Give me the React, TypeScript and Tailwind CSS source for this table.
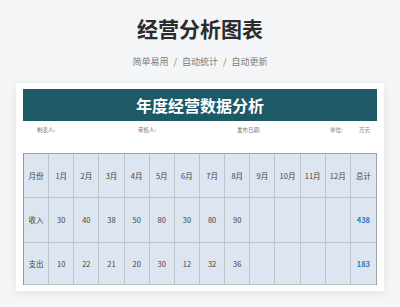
const months = ["1月", "2月", "3月", "4月", "5月", "6月", "7月", "8月", "9月", "10月", "11月", "12月"];

const rows = [
  { label: "收入", values: [30, 40, 38, 50, 80, 30, 80, 90], total: 438 },
  { label: "支出", values: [10, 22, 21, 20, 30, 12, 32, 36], total: 183 },
];

const font = { fontFamily: '"Noto Sans CJK SC", "Noto Sans", sans-serif' };

const Cell = ({ children, className = "text-[#444]" }: { children?: React.ReactNode; className?: string }) => (
  <div className={`flex items-center justify-center border-r border-b border-[#bcc4cd] last:border-r-0 ${className}`}>
    {children}
  </div>
);

export default function App() {
  return (
    <div className="w-[400px] h-[307px] overflow-hidden bg-[#f4f5f7]" style={font}>
      {/* Heading */}
      <div className="flex flex-col items-center pt-[14px]">
        <h1 className="text-[21px] leading-[28px] font-bold text-[#2b2b2b]">经营分析图表</h1>
        <div className="mt-[14px] flex items-center text-[9px] leading-[12px] text-[#7a7a7a]">
          <span>简单易用</span>
          <span className="mx-[5px]">/</span>
          <span>自动统计</span>
          <span className="mx-[5px]">/</span>
          <span>自动更新</span>
        </div>
      </div>

      {/* Card */}
      <div className="mx-4 mt-[15px] bg-white px-[7px] pt-[6px] pb-[6px] shadow-[0_2px_8px_rgba(0,0,0,0.08)]">
        <div className="h-[32px] bg-[#1e5a66] flex items-center justify-center">
          <span className="text-[16px] font-bold text-white">年度经营数据分析</span>
        </div>

        <div className="relative h-[32px] text-[5.5px] text-[#777]">
          <span className="absolute left-[14px] top-[5px]">制表人:</span>
          <span className="absolute left-[115px] top-[5px]">审核人:</span>
          <span className="absolute left-[214px] top-[5px]">发布日期:</span>
          <span className="absolute left-[307px] top-[5px]">单位:</span>
          <span className="absolute left-[336px] top-[5px]">万元</span>
        </div>

        <div className="bg-[#dce5f0] border-t border-l border-r border-[#9aa2aa] border-l-[#8f979f]">
          <div className="grid grid-cols-14 h-[44px] text-[7.5px]">
            <Cell>月份</Cell>
            {months.map((m) => (
              <Cell key={m}>{m}</Cell>
            ))}
            <Cell>总计</Cell>
          </div>
          {rows.map((r, i) => (
            <div key={r.label} className={`grid grid-cols-14 ${i === 0 ? "h-[45px]" : "h-[42px]"} text-[7.5px]`}>
              <Cell>{r.label}</Cell>
              {months.map((m, j) => (
                <Cell key={m}>{r.values[j] ?? ""}</Cell>
              ))}
              <Cell className="text-[#2f7cc0] font-bold">{r.total}</Cell>
            </div>
          ))}
        </div>
      </div>
    </div>
  );
}
